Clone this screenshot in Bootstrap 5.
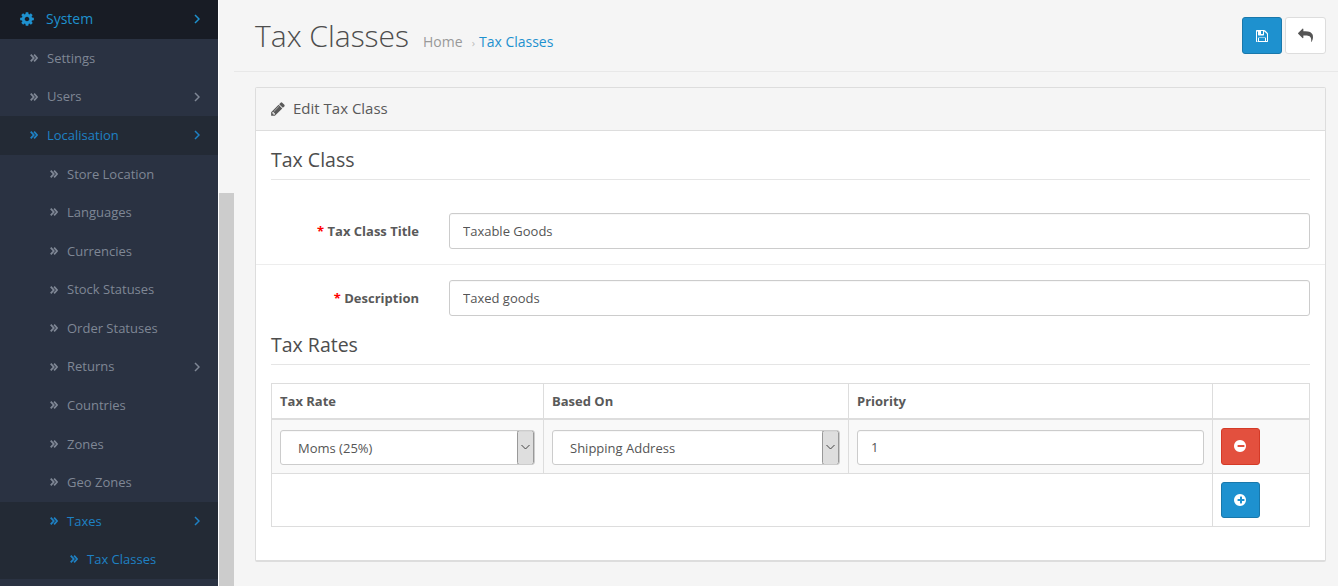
<!DOCTYPE html>
<html lang="en">
<head>
<meta charset="utf-8">
<title>Tax Classes</title>
<link href="https://cdn.jsdelivr.net/npm/bootstrap@5.3.0/dist/css/bootstrap.min.css" rel="stylesheet">
<style>
html,body{height:586px;overflow:hidden}
body{font-family:"Open Sans",sans-serif;font-size:13px;line-height:1.42857;color:#666;background:#f5f5f5}
.ic{fill:currentColor;flex:none}
.shell{height:586px}
.side{width:218px;background:#2a3242;color:#7f8795;flex:none;overflow:hidden}
.gutter{width:1px;background:#fff;flex:none}
.sbar{width:15px;flex:none}
.sbar-thumb{margin-top:193px;height:393px;background:#ccc}
.mitem{height:38.57px;color:#7f8795;text-decoration:none;padding-right:18px;flex:none}
.mitem.on{color:#1e81c4}
.mitem.top{height:38.9px;background:#181c25;padding-left:19px;font-size:14px;color:#1e91cf}
.l1{padding-left:30px}.l2{padding-left:50px}.l3{padding-left:70px}
.mlabel{flex:1}
.mdbl{margin-right:9px;flex:none}
.top .mlabel{margin-left:11px}
.mitem.act{background:#232a35}
.mainarea{min-width:0}
.pagehead{height:72px;border-bottom:1px solid #e8e8e8;padding:1px 12px 0 21px}
.ptitle{font-size:30px;font-weight:300;color:#4d4d4d;margin:0;line-height:1}
.crumbs{font-size:14px;color:#999;margin:11px 0 0 14px}
.crumbs a{color:#1e91cf;text-decoration:none}
.crumbs .sep{font-size:11px;color:#bbb;margin:0 4px 0 9px}
.headbtns{margin-top:-1px}
.btn-sq{width:40px;height:37px;padding:0;border-radius:3px}
.btn-blue{background:#1e91cf;border:1px solid #1978ab;color:#fff}
.btn-white{background:#fff;border:1px solid #ddd;color:#555;width:41px;margin-left:3px}
.btn-red{background:#e3503e;border:1px solid #d43a27;color:#fff;width:39px}
.btn-short{height:36px;background:#1e91cf;border:1px solid #1978ab;color:#fff;width:39px}
.panel{margin:15px 12px 0 21px;border:1px solid #ddd;border-bottom-width:2px;border-radius:2px;background:#fff;height:475px}
.phead{height:43px;background:#f5f5f5;border-bottom:1px solid #ddd;padding:0 14px;font-size:15px;color:#595959}
.phead .ic{margin-right:7px}
.pbody{padding:0 15px}
.lgd{font-size:19.5px;color:#4d4d4d;border-bottom:1px solid #e5e5e5;height:49px;padding-top:15px;line-height:28px;margin:0}
.lgd2{height:34px;padding-top:0;margin-top:15px}
.frow{padding:33px 0 15px}
.frow2{border-top:1px solid #ededed;margin:0 -15px;padding:15px 15px 0}
.flabel{width:178px;padding:0 30px 0 15px;text-align:right;font-weight:700;color:#595959;flex:none}
.req{color:#f00}
.finput{height:36px;border:1px solid #ccc;border-radius:3px;font-size:13px;color:#555;padding:8px 13px;box-shadow:inset 0 1px 1px rgba(0,0,0,.03)}
.cellin{height:35px;margin-top:2px}
.sel{padding-left:17px;background-image:url("data:image/svg+xml,%3Csvg xmlns='http://www.w3.org/2000/svg' width='17' height='35'%3E%3Crect x='.5' y='.5' width='16' height='34' rx='2' fill='%23dedede' stroke='%23999'/%3E%3Cpath d='M4.500 15l4 4 4-4' fill='none' stroke='%23444'/%3E%3C/svg%3E");background-position:right 0 center;background-size:17px 35px;background-repeat:no-repeat}
.grid{margin:18px 0 0;table-layout:fixed;width:1039px;border-color:#ddd;color:#666;--bs-table-bg:transparent;border-collapse:collapse}
.grid th,.grid td{border:1px solid #ddd;padding:8px;vertical-align:top;box-shadow:none}
.grid thead th{height:35px;border-bottom-width:2px;color:#595959;font-weight:700;padding-top:2px;padding-bottom:0;font-size:13px;vertical-align:middle}
.grid .c1{width:272px}.grid .c2{width:305px}.grid .c3{width:364px}.grid .c4{width:97px}
.rowa td{height:55px;background:#f9f9f9}
.rowb td{height:53px}
</style>
</head>
<body>
<svg width="0" height="0" class="position-absolute">
<defs>
<symbol id="i-dbl" viewBox="0 0 9 9"><path d="M.8 .8L4.200 4.500 .8 8.200M4.600 .8L8 4.500 4.600 8.200" fill="none" stroke="currentColor" stroke-width="2"/></symbol>
<symbol id="i-ang" viewBox="0 0 6 10"><path d="M1 1l4 4-4 4" fill="none" stroke="currentColor" stroke-width="1.500"/></symbol>
<symbol id="i-cog" viewBox="0 0 1792 1792"><path d="M1152 896q0-106-75-181t-181-75-181 75-75 181 75 181 181 75 181-75 75-181zm512-109v222q0 12-8 23t-20 13l-185 28q-19 54-39 91 35 50 107 138 10 12 10 25t-9 23q-27 37-99 108t-94 71q-12 0-26-9l-138-108q-44 23-91 38-16 136-29 186-7 28-36 28h-222q-14 0-24.500-8.500t-11.500-21.500l-28-184q-49-16-90-37l-141 107q-10 9-25 9-14 0-25-11-126-114-165-168-7-10-7-23 0-12 8-23 15-21 51-66.500t54-70.500q-27-50-41-99l-183-27q-13-2-21-12.500t-8-23.500v-222q0-12 8-23t19-13l186-28q14-46 39-92-40-57-107-138-10-12-10-24 0-10 9-23 26-36 98.500-107.500t94.500-71.500q13 0 26 10l138 107q44-23 91-38 16-136 29-186 7-28 36-28h222q14 0 24.500 8.500t11.500 21.500l28 184q49 16 90 37l142-107q9-9 24-9 13 0 25 10 129 119 165 170 7 8 7 22 0 12-8 23-15 21-51 66.500t-54 70.500q26 50 41 98l183 28q13 2 21 12.500t8 23.500z"/></symbol>
<symbol id="i-pen" viewBox="0 0 1792 1792"><path d="M491 1536l91-91-235-235-91 91v107h128v128h107zm523-928q0-22-22-22-10 0-17 7l-542 542q-7 7-7 17 0 22 22 22 10 0 17-7l542-542q7-7 7-17zm-54-192l416 416-832 832h-416v-416zm683 96q0 53-37 90l-166 166-416-416 166-165q36-38 90-38 53 0 91 38l235 234q37 39 37 91z"/></symbol>
<symbol id="i-save" viewBox="0 0 1792 1792"><path d="M512 1536h768v-384h-768v384zm896 0h128v-840q0-14-10-38.500t-20-34.500l-281-281q-10-10-34-20t-39-10v416q0 40-28 68t-68 28h-576q-40 0-68-28t-28-68v-416h-128v1280h128v-416q0-40 28-68t68-28h832q40 0 68 28t28 68v416zm-384-928v-320q0-13-9.500-22.500t-22.500-9.500h-192q-13 0-22.500 9.500t-9.500 22.500v320q0 13 9.500 22.500t22.500 9.500h192q13 0 22.500-9.500t9.500-22.500zm640 32v928q0 40-28 68t-68 28h-1344q-40 0-68-28t-28-68v-1344q0-40 28-68t68-28h928q40 0 88 20t76 48l280 280q28 28 48 76t20 88z"/></symbol>
<symbol id="i-reply" viewBox="0 0 1792 1792"><path d="M1792 1120q0 166-127 451-3 7-10.500 24t-13.500 30-13 22q-12 17-28 17-15 0-23.500-10t-8.500-25q0-9 2.500-26.500t2.500-23.500q5-68 5-123 0-101-17.500-181t-48.500-138.500-80-101-105.500-69.500-133-42.500-154-21.500-175.500-6h-224v256q0 26-19 45t-45 19-45-19l-512-512q-19-19-19-45t19-45l512-512q19-19 45-19t45 19 19 45v256h224q713 0 875 403 53 134 53 333z"/></symbol>
<symbol id="i-minus" viewBox="0 0 1792 1792"><path d="M1344 960v-128q0-26-19-45t-45-19h-768q-26 0-45 19t-19 45v128q0 26 19 45t45 19h768q26 0 45-19t19-45zm192-64q0 209-103 385.500t-279.500 279.500-385.500 103-385.500-103-279.500-279.500-103-385.500 103-385.500 279.500-279.500 385.500-103 385.500 103 279.500 279.500 103 385.500z"/></symbol>
<symbol id="i-plus" viewBox="0 0 1792 1792"><path d="M1344 960v-128q0-26-19-45t-45-19h-256v-256q0-26-19-45t-45-19h-128q-26 0-45 19t-19 45v256h-256q-26 0-45 19t-19 45v128q0 26 19 45t45 19h256v256q0 26 19 45t45 19h128q26 0 45-19t19-45v-256h256q26 0 45-19t19-45zm192-64q0 209-103 385.500t-279.500 279.500-385.500 103-385.500-103-279.500-279.500-103-385.500 103-385.500 279.500-279.500 385.500-103 385.500 103 279.500 279.500 103 385.500z"/></symbol>
</defs>
</svg>
<div class="shell d-flex">
  <nav class="side d-flex flex-column">
    <a class="mitem top d-flex align-items-center" href="#"><svg class="ic" width="16" height="16"><use href="#i-cog"/></svg><span class="mlabel">System</span><svg width="6" height="10"><use href="#i-ang"/></svg></a>
    <a class="mitem l1 d-flex align-items-center" href="#"><svg class="mdbl" width="8" height="8"><use href="#i-dbl"/></svg><span class="mlabel">Settings</span></a>
    <a class="mitem l1 d-flex align-items-center" href="#"><svg class="mdbl" width="8" height="8"><use href="#i-dbl"/></svg><span class="mlabel">Users</span><svg width="6" height="10"><use href="#i-ang"/></svg></a>
    <a class="mitem act on l1 d-flex align-items-center" href="#"><svg class="mdbl" width="8" height="8"><use href="#i-dbl"/></svg><span class="mlabel">Localisation</span><svg width="6" height="10"><use href="#i-ang"/></svg></a>
    <a class="mitem l2 d-flex align-items-center" href="#"><svg class="mdbl" width="8" height="8"><use href="#i-dbl"/></svg><span class="mlabel">Store Location</span></a>
    <a class="mitem l2 d-flex align-items-center" href="#"><svg class="mdbl" width="8" height="8"><use href="#i-dbl"/></svg><span class="mlabel">Languages</span></a>
    <a class="mitem l2 d-flex align-items-center" href="#"><svg class="mdbl" width="8" height="8"><use href="#i-dbl"/></svg><span class="mlabel">Currencies</span></a>
    <a class="mitem l2 d-flex align-items-center" href="#"><svg class="mdbl" width="8" height="8"><use href="#i-dbl"/></svg><span class="mlabel">Stock Statuses</span></a>
    <a class="mitem l2 d-flex align-items-center" href="#"><svg class="mdbl" width="8" height="8"><use href="#i-dbl"/></svg><span class="mlabel">Order Statuses</span></a>
    <a class="mitem l2 d-flex align-items-center" href="#"><svg class="mdbl" width="8" height="8"><use href="#i-dbl"/></svg><span class="mlabel">Returns</span><svg width="6" height="10"><use href="#i-ang"/></svg></a>
    <a class="mitem l2 d-flex align-items-center" href="#"><svg class="mdbl" width="8" height="8"><use href="#i-dbl"/></svg><span class="mlabel">Countries</span></a>
    <a class="mitem l2 d-flex align-items-center" href="#"><svg class="mdbl" width="8" height="8"><use href="#i-dbl"/></svg><span class="mlabel">Zones</span></a>
    <a class="mitem l2 d-flex align-items-center" href="#"><svg class="mdbl" width="8" height="8"><use href="#i-dbl"/></svg><span class="mlabel">Geo Zones</span></a>
    <a class="mitem act on l2 d-flex align-items-center" href="#"><svg class="mdbl" width="8" height="8"><use href="#i-dbl"/></svg><span class="mlabel">Taxes</span><svg width="6" height="10"><use href="#i-ang"/></svg></a>
    <a class="mitem act on l3 d-flex align-items-center" href="#"><svg class="mdbl" width="8" height="8"><use href="#i-dbl"/></svg><span class="mlabel">Tax Classes</span></a>
  </nav>
  <div class="gutter"></div>
  <div class="sbar"><div class="sbar-thumb"></div></div>
  <main class="flex-grow-1 mainarea">
    <header class="pagehead d-flex align-items-center justify-content-between">
      <div class="d-flex align-items-center">
        <h1 class="ptitle">Tax Classes</h1>
        <div class="crumbs"><span>Home</span><span class="sep">›</span><a href="#">Tax Classes</a></div>
      </div>
      <div class="d-flex headbtns">
        <button class="btn btn-sq btn-blue d-flex align-items-center justify-content-center" type="button" aria-label="Save"><svg class="ic" width="14" height="14"><use href="#i-save"/></svg></button>
        <button class="btn btn-sq btn-white d-flex align-items-center justify-content-center" type="button" aria-label="Back"><svg class="ic" width="15" height="15"><use href="#i-reply"/></svg></button>
      </div>
    </header>
    <section class="panel">
      <div class="phead d-flex align-items-center"><svg class="ic" width="16" height="16"><use href="#i-pen"/></svg><span>Edit Tax Class</span></div>
      <div class="pbody">
        <h2 class="lgd">Tax Class</h2>
        <div class="frow d-flex align-items-center">
          <label class="flabel"><span class="req">*</span> Tax Class Title</label>
          <input class="form-control finput" value="Taxable Goods">
        </div>
        <div class="frow2 d-flex align-items-center">
          <label class="flabel"><span class="req">*</span> Description</label>
          <input class="form-control finput" value="Taxed goods">
        </div>
        <h2 class="lgd lgd2">Tax Rates</h2>
        <table class="table grid">
          <thead><tr><th class="c1">Tax Rate</th><th class="c2">Based On</th><th class="c3">Priority</th><th class="c4"></th></tr></thead>
          <tbody>
            <tr class="rowa">
              <td><select class="form-select finput sel cellin"><option>Moms (25%)</option></select></td>
              <td><select class="form-select finput sel cellin"><option>Shipping Address</option></select></td>
              <td><input class="form-control finput cellin" value="1"></td>
              <td><button class="btn btn-sq btn-red d-flex align-items-center justify-content-center" type="button" aria-label="Remove"><svg class="ic" width="14" height="14"><use href="#i-minus"/></svg></button></td>
            </tr>
            <tr class="rowb">
              <td colspan="3"></td>
              <td><button class="btn btn-sq btn-short d-flex align-items-center justify-content-center" type="button" aria-label="Add"><svg class="ic" width="14" height="14"><use href="#i-plus"/></svg></button></td>
            </tr>
          </tbody>
        </table>
      </div>
    </section>
  </main>
</div>
</body>
</html>
